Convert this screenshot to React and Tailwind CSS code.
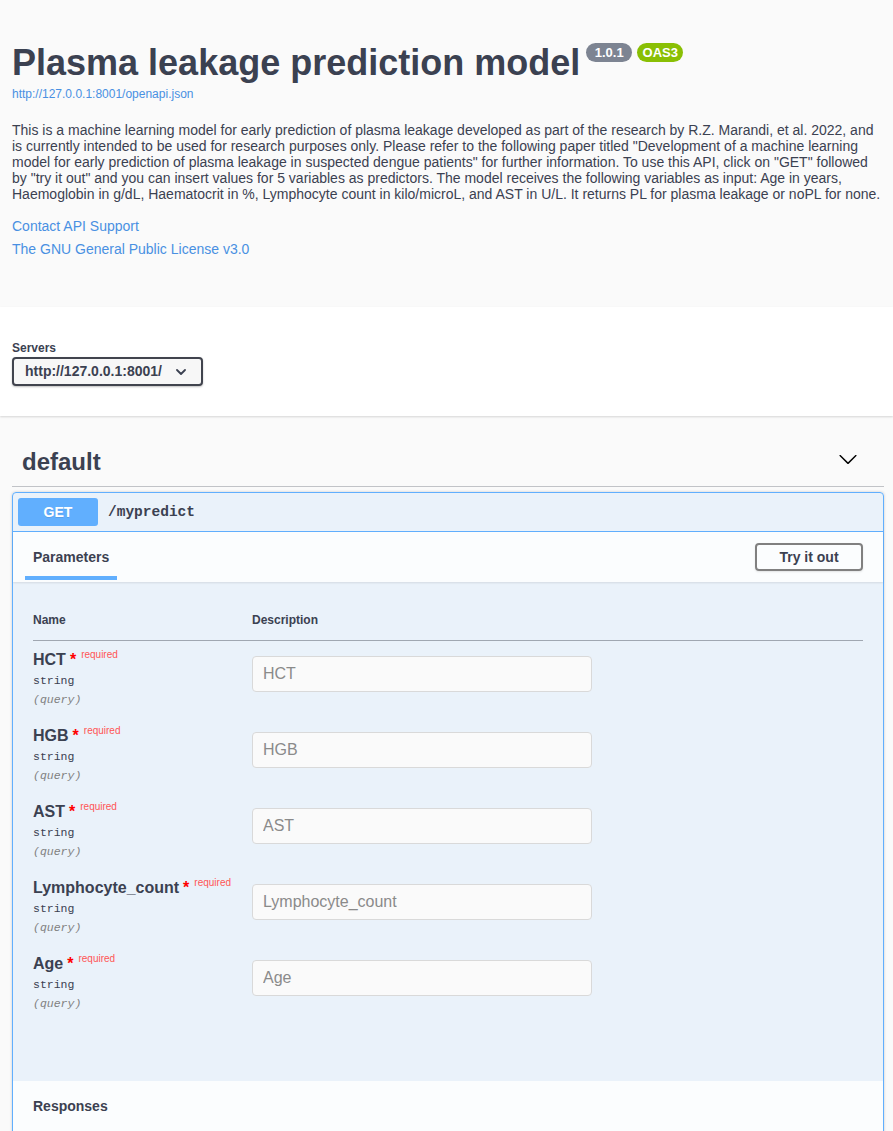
import React from "react";

const params = ["HCT", "HGB", "AST", "Lymphocyte_count", "Age"];

function Arrow({ className }) {
  return (
    <svg className={className} viewBox="0 0 20 20" aria-hidden="true">
      <path
        fill="currentColor"
        d="M17.418 6.109c.272-.268.709-.268.979 0s.271.701 0 .969l-7.908 7.83c-.27.268-.707.268-.979 0l-7.908-7.83c-.27-.268-.27-.701 0-.969.271-.268.709-.268.979 0L10 13.25l7.418-7.141z"
      />
    </svg>
  );
}

function ParamRow({ name }) {
  return (
    <div className="flex h-[76px] pt-[10px]">
      <div className="w-[219px] shrink-0">
        <div className="flex items-start leading-[18px] h-[18px]">
          <span className="text-[16px] font-bold text-[#3b4151]">{name}</span>
          <span className="text-[16px] font-bold text-[#ff0000] ml-[4px]">*</span>
          <span className="text-[10px] text-[#ff5555] ml-[5px] leading-[12px] mt-[-2px]">required</span>
        </div>
        <div className="mt-[3px] leading-[18px] h-[18px] text-[11.5px] text-[#3b4151] font-['Liberation_Mono',monospace]">
          string
        </div>
        <div className="mt-[1px] leading-[18px] h-[18px] text-[11.5px] italic text-[#808080] font-['Liberation_Mono',monospace]">
          (query)
        </div>
      </div>
      <div className="pt-[5px]">
        <input
          placeholder={name}
          className="w-[340px] h-[36px] rounded-[4px] border border-[#d9d9d9] bg-[#fafafa] px-[10px] text-[16px] text-[#3b4151] placeholder:text-[#8a8a8a] outline-none"
        />
      </div>
    </div>
  );
}

export default function App() {
  return (
    <div className="min-h-screen bg-[#fafafa] text-[#3b4151] font-['Liberation_Sans',Arial,sans-serif]">
      {/* Info */}
      <div className="px-3 pt-[42px] h-[307px]">
        <div className="flex items-start">
          <h2 className="text-[36px] font-bold leading-[41px] text-[#3b4151]">
            Plasma leakage prediction model
          </h2>
          <span className="ml-[6px] mt-[1px] h-[19px] w-[46px] rounded-full bg-[#7d8492] text-white text-[13px] font-bold flex items-center justify-center">
            1.0.1
          </span>
          <span className="ml-[5px] mt-[1px] h-[19px] w-[46px] rounded-full bg-[#89bf04] text-white text-[13px] font-bold flex items-center justify-center">
            OAS3
          </span>
        </div>
        <div className="mt-[4px] text-[12px] leading-[14px] text-[#4990e2]">
          http://127.0.0.1:8001/openapi.json
        </div>
        <p className="mt-[21px] text-[14px] leading-[16px] text-[#3b4151]">
          This is a machine learning model for early prediction of plasma leakage developed as part of the research by R.Z. Marandi, et al. 2022, and is currently intended to be used for research purposes only. Please refer to the following paper titled "Development of a machine learning model for early prediction of plasma leakage in suspected dengue patients" for further information. To use this API, click on "GET" followed by "try it out" and you can insert values for 5 variables as predictors. The model receives the following variables as input: Age in years, Haemoglobin in g/dL, Haematocrit in %, Lymphocyte count in kilo/microL, and AST in U/L. It returns PL for plasma leakage or noPL for none.
        </p>
        <div className="mt-[16px] text-[14px] leading-[16px] text-[#4990e2]">Contact API Support</div>
        <div className="mt-[7px] text-[14px] leading-[16px] text-[#4990e2]">The GNU General Public License v3.0</div>
      </div>

      {/* Servers */}
      <div className="bg-white h-[109px] px-3 pt-[34px] shadow-[0_1px_2px_0_rgba(0,0,0,0.15)]">
        <div className="text-[12px] font-bold leading-[14px] text-[#3b4151]">Servers</div>
        <div className="mt-[2px] w-[191px] h-[29px] rounded-[4px] border-2 border-[#41444e] bg-[#f7f7f7] shadow-[0_1px_2px_0_rgba(0,0,0,0.25)] flex items-center pl-[11px] pr-[15px] justify-between">
          <span className="text-[14px] font-bold text-[#3b4151]">http://127.0.0.1:8001/</span>
          <svg className="w-[10px] h-[6px] text-[#3b4151]" viewBox="0 0 10 6" aria-hidden="true">
            <polyline points="1,1 5,5 9,1" fill="none" stroke="currentColor" strokeWidth="1.8" strokeLinecap="round" strokeLinejoin="round" />
          </svg>
        </div>
      </div>

      {/* Tag section */}
      <div className="pl-3 pr-[9px] pt-[22px]">
        <div className="flex items-center justify-between h-[49px] pl-[10px] pr-[26px] border-b border-[#c1c3c7]">
          <span className="text-[24px] font-bold leading-[28px] text-[#3b4151]">default</span>
          <Arrow className="w-[20px] h-[20px] text-[#000000] mt-[-6px]" />
        </div>

        <div className="mt-[5px] border border-[#61affe] rounded-[4px] bg-[rgba(97,175,254,0.1)] shadow-[0_0_3px_rgba(0,0,0,0.19)]">
          {/* summary */}
          <div className="flex items-center p-[5px] border-b border-[#61affe]">
            <span className="w-[80px] h-[28px] rounded-[3px] bg-[#61affe] text-white text-[14px] font-bold flex items-center justify-center [text-shadow:0_1px_0_rgba(0,0,0,0.1)]">
              GET
            </span>
            <span className="ml-[10px] mt-[2px] text-[14.5px] font-bold text-[#3b4151] font-['Liberation_Mono',monospace]">
              /mypredict
            </span>
          </div>

          {/* Parameters header */}
          <div className="h-[50px] bg-[rgba(255,255,255,0.8)] flex items-center justify-between px-[20px] shadow-[0_1px_2px_rgba(0,0,0,0.1)]">
            <div className="relative h-[50px] flex items-center">
              <span className="text-[14px] font-bold text-[#3b4151]">Parameters</span>
              <span className="absolute left-[-8px] right-[-8px] bottom-[2px] h-[4px] bg-[#61affe]" />
            </div>
            <button className="w-[108px] h-[28px] rounded-[4px] border-2 border-[#808080] bg-transparent text-[14px] font-bold text-[#3b4151] shadow-[0_1px_2px_rgba(0,0,0,0.1)]">
              Try it out
            </button>
          </div>

          {/* Parameters table */}
          <div className="px-[20px] pt-[31px] pb-[60px]">
            <div className="flex border-b border-[#a0a7b1] pb-[13px]">
              <div className="w-[219px] text-[12px] font-bold leading-[14px]">Name</div>
              <div className="text-[12px] font-bold leading-[14px]">Description</div>
            </div>
            {params.map((p) => (
              <ParamRow key={p} name={p} />
            ))}
          </div>

          {/* Responses header */}
          <div className="h-[60px] bg-[rgba(255,255,255,0.8)] px-[20px] pt-[17px] leading-[16px]">
            <span className="text-[14px] font-bold leading-[16px] text-[#3b4151]">Responses</span>
          </div>
        </div>
      </div>
    </div>
  );
}
